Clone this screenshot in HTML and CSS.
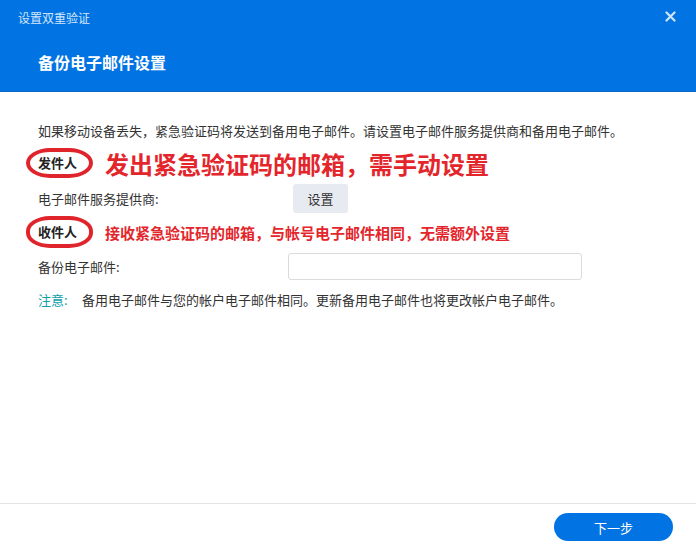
FILE: index.html
```html
<!DOCTYPE html>
<html lang="zh-CN">
<head>
  <meta charset="UTF-8">
  <meta name="viewport" content="width=device-width, initial-scale=1.0">
  <title>设置双重验证</title>
  <link rel="stylesheet" href="styles.css">
</head>
<body>
  <div class="dialog">
    <div class="header">
      <div class="titlebar">
        <span class="title">设置双重验证</span>
        <button class="close" aria-label="关闭">
          <svg width="11" height="11" viewBox="0 0 11 11"><path d="M1.5 1.5 L9.5 9.5 M9.5 1.5 L1.5 9.5" stroke="currentColor" stroke-width="2.2" stroke-linecap="round"/></svg>
        </button>
      </div>
      <h1>备份电子邮件设置</h1>
    </div>

    <div class="content">
      <p class="intro">如果移动设备丢失，紧急验证码将发送到备用电子邮件。请设置电子邮件服务提供商和备用电子邮件。</p>

      <div class="note-row big">
        <span class="badge">发件人</span>
        <span class="mark">发出紧急验证码的邮箱，需手动设置</span>
      </div>

      <div class="field provider">
        <label>电子邮件服务提供商:</label>
        <button class="btn-gray">设置</button>
      </div>

      <div class="note-row small">
        <span class="badge">收件人</span>
        <span class="mark">接收紧急验证码的邮箱，与帐号电子邮件相同，无需额外设置</span>
      </div>

      <div class="field backup">
        <label>备份电子邮件:</label>
        <input type="text">
      </div>

      <p class="notice"><span class="notice-label">注意:</span>备用电子邮件与您的帐户电子邮件相同。更新备用电子邮件也将更改帐户电子邮件。</p>
    </div>

    <div class="footer">
      <button class="btn-next">下一步</button>
    </div>
  </div>
</body>
</html>
```

FILE: styles.css
```css
body {
  margin: 0;
  font-family: "Noto Sans CJK SC", "Noto Sans", sans-serif;
  color: #333;
  background: #fff;
}
.dialog {
  width: 696px;
  height: 549px;
  display: flex;
  flex-direction: column;
}
.header {
  background: #0273e3;
  border-bottom: 1px solid #0a67c2;
  height: 91px;
}
.titlebar {
  height: 34px;
  display: flex;
  align-items: center;
  justify-content: space-between;
  padding: 0 20px 0 18px;
}
.title {
  font-size: 12px;
  color: #d3e7fc;
}
.close {
  border: none;
  background: none;
  padding: 0;
  color: #cfe5ff;
  display: flex;
  margin-top: -2px;
}
.header h1 {
  margin: 0;
  padding-left: 38px;
  height: 57px;
  line-height: 57px;
  font-size: 16px;
  font-weight: bold;
  color: #fff;
}
.content {
  flex: 1;
  padding: 29px 38px 0;
}
.intro {
  margin: 0;
  font-size: 13px;
  line-height: 20px;
}
.note-row {
  display: flex;
  align-items: center;
}
.note-row.big {
  margin-top: 7px;
  height: 30px;
}
.note-row.small {
  margin-top: 2px;
  height: 34px;
}
.badge {
  box-sizing: border-box;
  width: 67px;
  margin-left: -12px;
  padding-left: 8px;
  border: 4px solid #e0242b;
  border-radius: 24px / 15px;
  font-size: 13px;
  font-weight: bold;
  color: #222;
}
.big .badge {
  height: 30px;
  line-height: 22px;
}
.small .badge {
  height: 32px;
  line-height: 24px;
}
.mark {
  margin-left: 12px;
  color: #e3262c;
  font-weight: bold;
}
.big .mark {
  font-size: 24px;
}
.small .mark {
  font-size: 15px;
}
.field {
  display: flex;
  align-items: center;
  font-size: 13px;
}
.provider {
  margin-top: 6px;
}
.provider label {
  width: 255px;
}
.btn-gray {
  width: 55px;
  height: 29px;
  border: none;
  border-radius: 3px;
  background: #e7eaf1;
  color: #333;
  font-family: inherit;
  font-size: 13px;
}
.backup {
  margin-top: 4px;
}
.backup label {
  width: 250px;
}
.backup input {
  box-sizing: border-box;
  width: 294px;
  height: 27px;
  border: 1px solid #d9dbde;
  border-radius: 3px;
}
.notice {
  margin: 10px 0 0;
  font-size: 13px;
  line-height: 20px;
}
.notice-label {
  color: #0e9ea8;
  display: inline-block;
  width: 44px;
}
.footer {
  box-sizing: border-box;
  height: 46px;
  border-top: 1px solid #e2e4e7;
  display: flex;
  justify-content: flex-end;
  align-items: flex-start;
  padding: 9px 23px 0 0;
}
.btn-next {
  width: 119px;
  height: 28px;
  border: none;
  border-radius: 14px;
  background: #0273e3;
  color: #fff;
  font-family: inherit;
  font-size: 13px;
}
```
